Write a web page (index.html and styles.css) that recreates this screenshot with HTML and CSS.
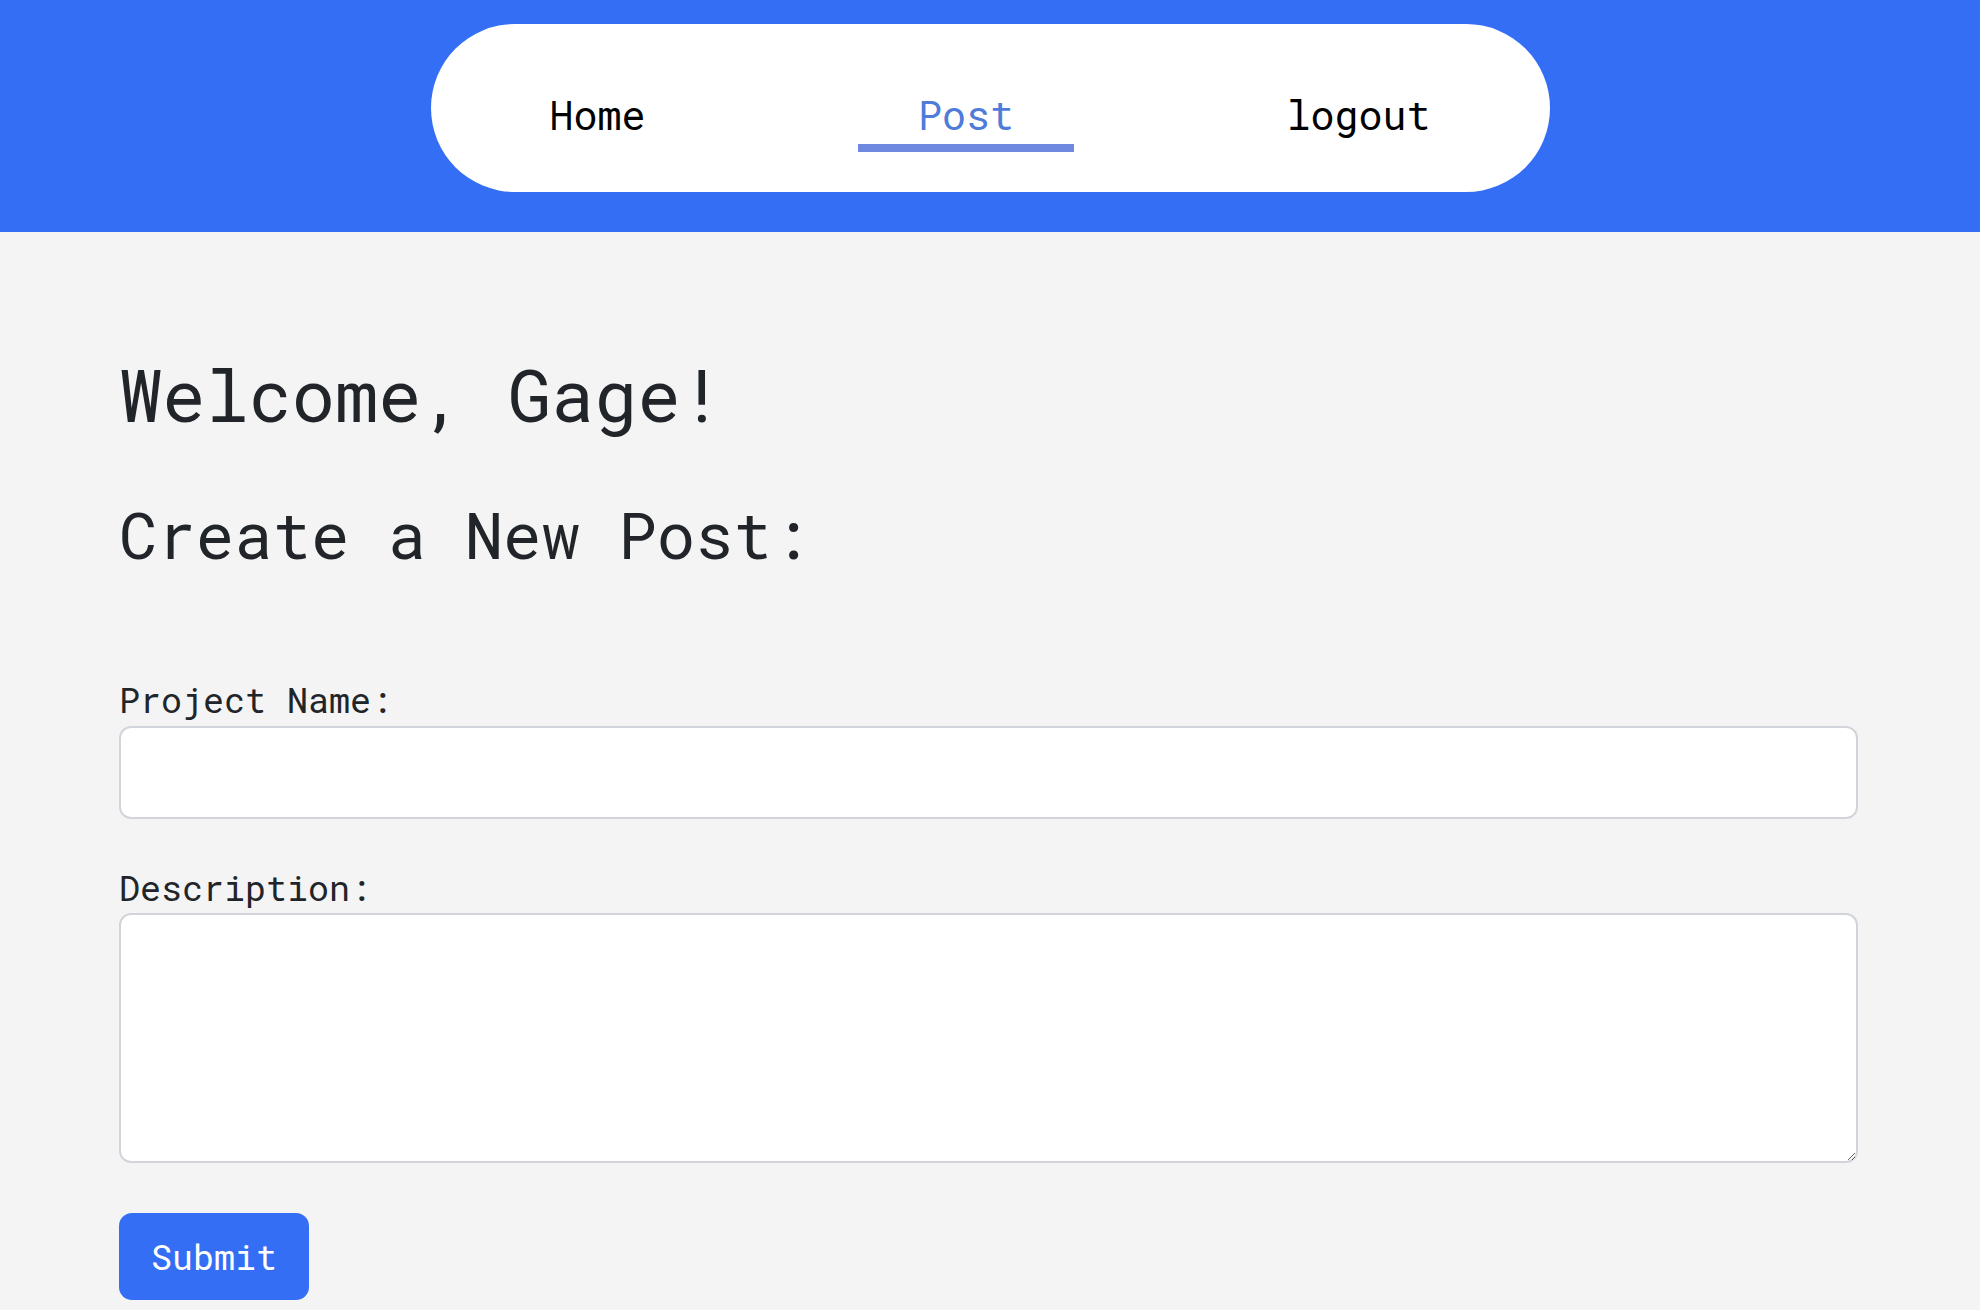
FILE: index.html
```html
<!DOCTYPE html>
<html lang="en">
<head>
<meta charset="utf-8">
<title>Create a New Post</title>
<link rel="stylesheet" href="styles.css">
</head>
<body>
<header class="topbar">
  <nav class="pill">
    <a class="nav-link" href="#">Home</a>
    <a class="nav-link active" href="#">Post</a>
    <a class="nav-link" href="#">logout</a>
  </nav>
</header>
<main class="content">
  <h1 class="welcome">Welcome, Gage!</h1>
  <h2 class="subtitle">Create a New Post:</h2>
  <form class="post-form">
    <label class="field-label" for="name">Project Name:</label>
    <input class="field-input" id="name" type="text">
    <label class="field-label desc-label" for="desc">Description:</label>
    <textarea class="field-textarea" id="desc"></textarea>
    <button class="submit-btn" type="button">Submit</button>
  </form>
</main>
</body>
</html>
```
FILE: styles.css
```css
html, body {
  margin: 0;
  padding: 0;
}
body {
  background: #f4f4f4;
  font-family: "Roboto Mono", "DejaVu Sans Mono", "Liberation Mono", monospace;
  color: #212529;
  overflow: hidden;
}
.topbar {
  background: #336ef5;
  height: 232px;
  padding-top: 24px;
  box-sizing: border-box;
}
.pill {
  width: 1119px;
  height: 168px;
  margin: 0 auto;
  box-sizing: border-box;
  background: #ffffff;
  border-radius: 84px;
  display: flex;
  justify-content: space-between;
  align-items: flex-start;
  padding: 67px 59px 0;
}
.nav-link {
  font-size: 40px;
  line-height: 48px;
  color: #000000;
  text-decoration: none;
  padding: 0 60px 5px;
  border-bottom: 8px solid transparent;
}
.nav-link.active {
  color: #4f7bd9;
  border-bottom-color: #6f88e0;
}
.content {
  padding: 120px 122px 0 119px;
}
.welcome {
  margin: 0;
  font-size: 72px;
  line-height: 86px;
  font-weight: 400;
}
.subtitle {
  margin: 58px 0 0;
  font-size: 64px;
  line-height: 77px;
  font-weight: 400;
}
.post-form {
  display: flex;
  flex-direction: column;
  align-items: flex-start;
  margin-top: 105px;
}
.field-label {
  font-size: 35px;
  line-height: 42px;
  margin-bottom: 6px;
}
.desc-label {
  margin-top: 47px;
  margin-bottom: 5px;
}
.field-input,
.field-textarea {
  display: block;
  width: 100%;
  box-sizing: border-box;
  background: #ffffff;
  border: 2px solid #d1d5db;
  border-radius: 12px;
  font-family: inherit;
  font-size: 30px;
  margin: 0;
}
.field-input {
  height: 93px;
}
.field-textarea {
  height: 250px;
  resize: vertical;
}
.submit-btn {
  margin-top: 50px;
  background: #336ef5;
  color: #ffffff;
  border: none;
  border-radius: 13px;
  font-family: inherit;
  font-size: 35px;
  line-height: 42px;
  padding: 22px 32px 23px;
  cursor: pointer;
}
```
